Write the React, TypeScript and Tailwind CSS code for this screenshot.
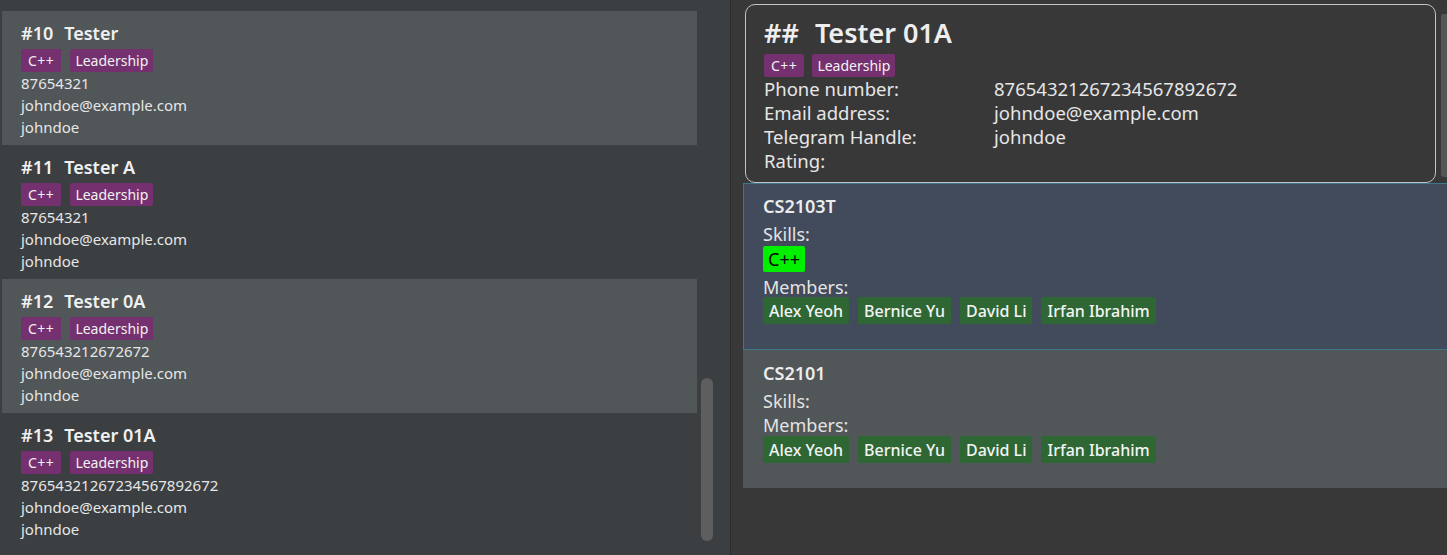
import React from 'react'

const font = { fontFamily: '"Noto Sans", "Open Sans", sans-serif' }

interface Person {
  idx: number
  name: string
  phone: string
}

const people: Person[] = [
  { idx: 10, name: 'Tester', phone: '87654321' },
  { idx: 11, name: 'Tester A', phone: '87654321' },
  { idx: 12, name: 'Tester 0A', phone: '876543212672672' },
  { idx: 13, name: 'Tester 01A', phone: '87654321267234567892672' },
]

const members = ['Alex Yeoh', 'Bernice Yu', 'David Li', 'Irfan Ibrahim']

function Tags({ gap }: { gap: string }) {
  return (
    <div className={`flex ${gap}`}>
      <span className="h-[23px] px-[7px] flex items-center rounded-[2px] bg-[#75306f] text-[#f2f2f2] text-[14px] tracking-[0.5px]">
        C++
      </span>
      <span className="h-[23px] px-[5px] flex items-center rounded-[2px] bg-[#75306f] text-[#f2f2f2] text-[14px]">
        Leadership
      </span>
    </div>
  )
}

function PersonCard({ p, odd }: { p: Person; odd: boolean }) {
  return (
    <div className={`h-[134px] pl-[19px] pt-[11px] ${odd ? 'bg-[#515658]' : 'bg-[#3c3f41]'}`}>
      <div className="h-[22px] flex items-center text-[18px] font-semibold text-[#f0f0f0]">
        <span>#{p.idx}</span>
        <span className="ml-[11px]">{p.name}</span>
      </div>
      <div className="mt-[5px]">
        <Tags gap="gap-[9px]" />
      </div>
      <div className="text-[15px] text-[#e6e6e6] leading-[22px]">
        <div>{p.phone}</div>
        <div>johndoe@example.com</div>
        <div>johndoe</div>
      </div>
    </div>
  )
}

function GreenTag({ children }: { children: React.ReactNode }) {
  return (
    <span className="h-[27px] px-[6px] flex items-center rounded-[2px] bg-[#2e6734] text-[#f4f4f4] text-[16px] font-medium">
      {children}
    </span>
  )
}

function GroupCard({ code, skills, selected }: { code: string; skills: string[]; selected?: boolean }) {
  return (
    <div
      className={
        selected
          ? 'h-[167px] pl-[19px] pt-[11px] bg-[#414b5c] border border-[#3c7888] border-r-0'
          : 'h-[138px] pl-[20px] pt-[12px] bg-[#515658]'
      }
    >
      <div className="h-[22px] flex items-center text-[18px] font-semibold text-[#ececec]">{code}</div>
      <div className="text-[18px] text-[#e4e4e4] leading-[24px] mt-[5px]">Skills:</div>
      {skills.length > 0 && (
        <div className="flex mb-[3px]">
          <span className="h-[26px] px-[5px] flex items-center rounded-[2px] bg-[#00f000] text-black text-[18px]">
            {skills[0]}
          </span>
        </div>
      )}
      <div className="text-[18px] text-[#e4e4e4] leading-[24px]">Members:</div>
      <div className={`flex gap-[9px] ${selected ? '-mt-[2px]' : '-mt-[1px]'}`}>
        {members.map(m => (
          <GreenTag key={m}>{m}</GreenTag>
        ))}
      </div>
    </div>
  )
}

function DetailRow({ label, value }: { label: string; value: string }) {
  return (
    <div className="flex">
      <span className="w-[230px] shrink-0">{label}</span>
      <span>{value}</span>
    </div>
  )
}

export default function App() {
  return (
    <div className="w-[1447px] h-[555px] flex bg-[#383838] overflow-hidden" style={font}>
      {/* Left list */}
      <div className="w-[730px] shrink-0 h-full flex bg-[#3c3f41] pl-[2px]">
        <div className="w-[695px] shrink-0 pt-[11px]">
          {people.map((p, i) => (
            <PersonCard key={p.idx} p={p} odd={i % 2 === 0} />
          ))}
        </div>
        <div className="flex-1 pt-[378px] pl-[4px]">
          <div className="w-[12px] h-[163px] rounded-full bg-[#5e5e5e]" />
        </div>
      </div>
      <div className="w-[1px] shrink-0 h-full bg-[#2c2c2c]" />

      {/* Right side */}
      <div className="w-[716px] shrink-0 flex flex-col pt-[4px] pl-[14px]">
        <div className="flex">
          <div className="w-[691px] shrink-0 h-[179px] rounded-[10px] border border-[#c4c4c4] bg-[#383838] pl-[18px] pt-[11px]">
            <div className="h-[34px] flex items-center text-[27px] font-semibold text-[#eeeeee]">
              <span>##</span>
              <span className="ml-[16px]">Tester 01A</span>
            </div>
            <div className="mt-[4px]">
              <Tags gap="gap-[8px]" />
            </div>
            <div className="text-[18.5px] text-[#e6e6e6] leading-[24px]">
              <DetailRow label="Phone number:" value="87654321267234567892672" />
              <DetailRow label="Email address:" value="johndoe@example.com" />
              <DetailRow label="Telegram Handle:" value="johndoe" />
              <DetailRow label="Rating:" value="" />
            </div>
          </div>
          <div className="ml-[5px] mt-[10px] w-[6px] h-[163px] rounded-l-[3px] bg-[#565656]" />
        </div>
        <div className="-ml-[2px]">
          <GroupCard code="CS2103T" skills={['C++']} selected />
          <GroupCard code="CS2101" skills={[]} />
        </div>
      </div>
    </div>
  )
}
